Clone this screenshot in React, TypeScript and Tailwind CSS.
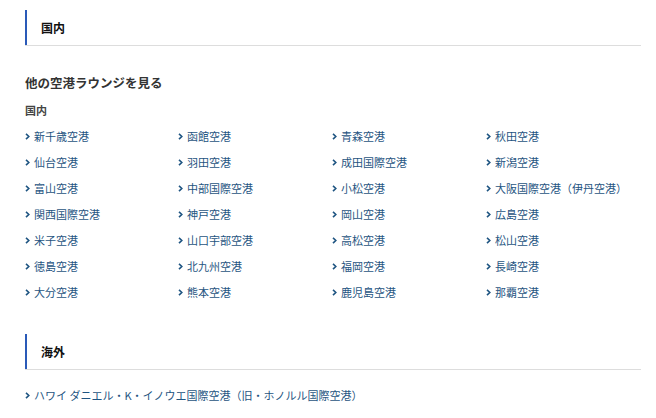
import React from "react";

const domestic = [
  "新千歳空港", "函館空港", "青森空港", "秋田空港",
  "仙台空港", "羽田空港", "成田国際空港", "新潟空港",
  "富山空港", "中部国際空港", "小松空港", "大阪国際空港（伊丹空港）",
  "関西国際空港", "神戸空港", "岡山空港", "広島空港",
  "米子空港", "山口宇部空港", "高松空港", "松山空港",
  "徳島空港", "北九州空港", "福岡空港", "長崎空港",
  "大分空港", "熊本空港", "鹿児島空港", "那覇空港",
];

function Chevron() {
  return (
    <svg width="5" height="7" viewBox="0 0 5 7" className="shrink-0">
      <path d="M1 0.8 L3.8 3.5 L1 6.2" fill="none" stroke="#1f5582" strokeWidth="1.6" />
    </svg>
  );
}

function LinkItem({ label }: { label: string }) {
  return (
    <div className="flex items-center h-[26px] gap-[4px]">
      <Chevron />
      <span className="text-[11px] text-[#1f5582] whitespace-nowrap">{label}</span>
    </div>
  );
}

function Header({ label }: { label: string }) {
  return (
    <div className="h-[36px] flex items-stretch border-b border-[#dddddd]">
      <div className="border-l-2 border-[#2a5ab8] pl-[14px] flex items-center">
        <span className="text-[12px] font-bold text-[#111]">{label}</span>
      </div>
    </div>
  );
}

export default function App() {
  return (
    <div
      className="w-[656px] h-[418px] bg-white overflow-hidden"
      style={{ fontFamily: '"Noto Sans CJK JP", "Noto Sans", sans-serif' }}
    >
      <div className="pl-[25px] w-[641px] pt-[10px]">
        <Header label="国内" />
        <div className="mt-[27px] text-[12.5px] leading-[20px] font-bold text-[#333]">他の空港ラウンジを見る</div>
        <div className="mt-[9px] text-[11px] leading-[16px] font-bold text-[#444]">国内</div>
        <div className="mt-[5px] grid grid-cols-[153px_154px_154px_1fr]">
          {domestic.map((a) => (
            <LinkItem key={a} label={a} />
          ))}
        </div>
        <div className="mt-[29px]">
          <Header label="海外" />
        </div>
        <div className="mt-[12px]">
          <LinkItem label="ハワイ ダニエル・K・イノウエ国際空港（旧・ホノルル国際空港）" />
        </div>
      </div>
    </div>
  );
}
